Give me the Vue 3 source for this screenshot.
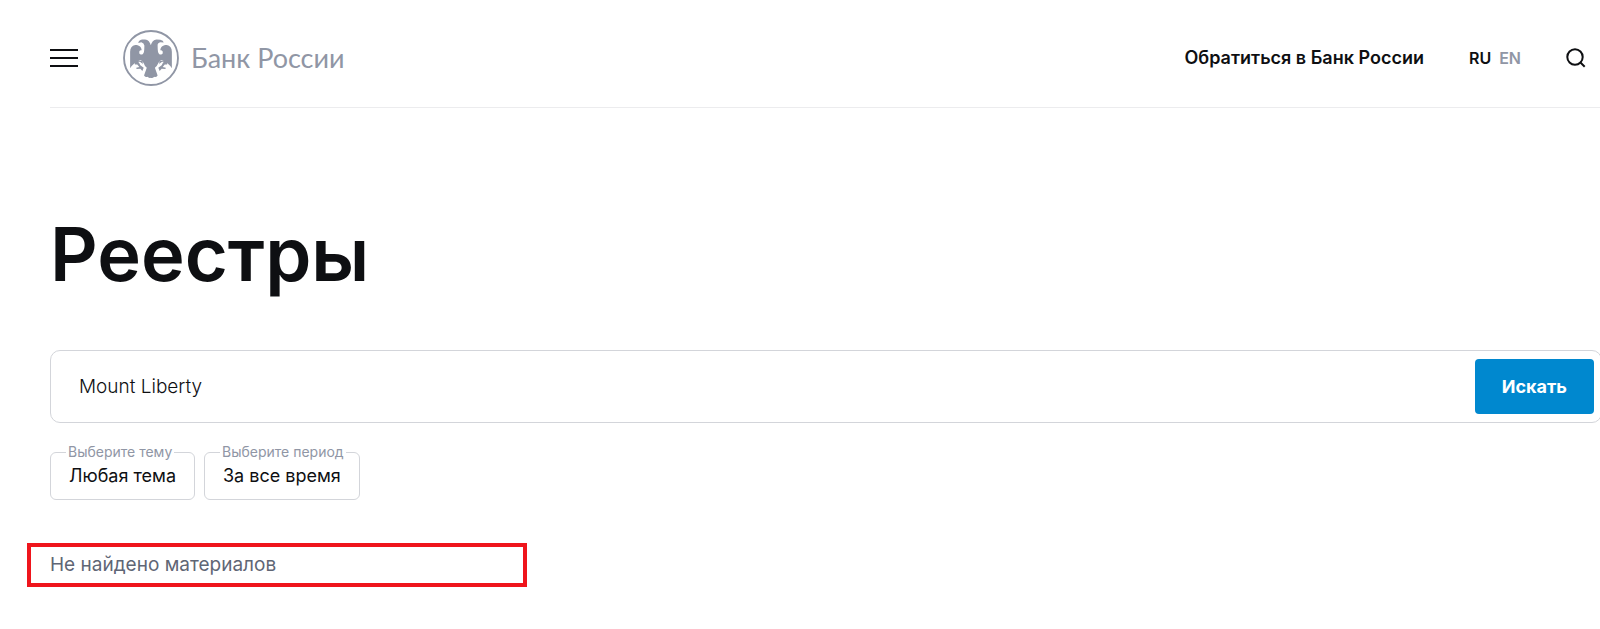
<script setup>
import { ref } from 'vue'

const query = ref('Mount Liberty')
const theme = ref('Любая тема')
const period = ref('За все время')
</script>

<template>
  <div class="page">
    <header class="header">
      <button class="icon-button" type="button" aria-label="Меню">
        <svg width="28" height="18" viewBox="0 0 28 18">
          <path d="M0 1h28M0 9h28M0 17h28" stroke="#0e0f12" stroke-width="2" />
        </svg>
      </button>
      <a class="logo" href="#">
        <svg width="56" height="56" viewBox="0 0 165 165" aria-hidden="true">
          <circle cx="82.5" cy="82.5" r="79.5" fill="none" stroke="#9096a5" stroke-width="5.5" />
          <g fill="#9096a5">
            <path d="M82 45C84 36 90 29 99 28L110 29Q119 31 120 37L110 36Q101 39 102 46Q102 56 103 63C104 70 108 73 113 72Q119 70 117 63Q114 59 110 60C110 49 119 44 129 44Q144 47 144 64V113Q139 104 130 97Q123 91 113 89Q106 91 104 98Q100 107 94 111L102 134Q98 140 92 138Q87 143 82 141Q77 143 73 138Q66 140 62 134L70 111Q64 107 61 98Q58 91 52 89Q42 91 35 97Q26 104 21 113V64Q21 47 36 44C46 44 55 49 55 60Q50 59 48 63Q46 70 52 72C57 73 61 70 62 63Q63 56 63 46Q62 39 54 36L45 38Q46 30 56 28L65 28C74 29 80 36 82 45Z" />
            <path d="M36 91H58V106H36ZM107 91H129V106H107Z" />
          </g>
          <path d="M29 109Q38 92 51 94Q59 97 62 108L68 113L64 123L54 119L28 119ZM136 109Q127 92 114 94Q106 97 103 108L97 113L101 123L111 119L137 119Z" fill="#fff" />
          <g fill="#9096a5">
            <path d="M34 96Q42 91 47 96L51 104L61 111L57 121L51 114L40 115L39 111L48 109L42 102L35 102Z" />
            <path d="M131 96Q123 91 118 96L114 104L104 111L108 121L114 114L125 115L126 111L117 109L123 102L130 102Z" />
          </g>
        </svg>
        <span class="logo-text">Банк России</span>
      </a>
      <a class="contact" href="#">Обратиться в Банк России</a>
      <nav class="languages" aria-label="Язык">
        <a class="language active" href="#">RU</a>
        <a class="language" href="#">EN</a>
      </nav>
      <button class="icon-button" type="button" aria-label="Поиск">
        <svg width="20" height="20" viewBox="0 0 20 20" fill="none" stroke="#0e0f12" stroke-width="2">
          <circle cx="9" cy="9" r="7.7" />
          <path d="M14.2 14.2L18.7 18.7" />
        </svg>
      </button>
    </header>

    <main class="content">
      <h1 class="title">Реестры</h1>
      <form @submit.prevent>
        <div class="search">
          <input v-model="query" class="query" type="text" aria-label="Поиск по реестрам" />
          <button class="submit" type="submit">Искать</button>
        </div>
        <div class="filters">
          <div class="filter">
            <label class="filter-label" for="theme">Выберите тему</label>
            <select id="theme" v-model="theme" class="filter-select">
              <option>Любая тема</option>
            </select>
          </div>
          <div class="filter">
            <label class="filter-label" for="period">Выберите период</label>
            <select id="period" v-model="period" class="filter-select">
              <option>За все время</option>
            </select>
          </div>
        </div>
      </form>
      <p class="result">Не найдено материалов</p>
    </main>
  </div>
</template>

<style>
body {
  margin: 0;
  background: #fff;
}
</style>

<style scoped>
.page {
  padding-left: 50px;
  overflow: hidden;
  font-family: Inter, "Liberation Sans", sans-serif;
  color: #0e0f12;
}

.header {
  display: flex;
  align-items: center;
  padding: 30px 14px 21px 0;
  border-bottom: 1px solid #ececee;
}

.icon-button {
  display: flex;
  padding: 0;
  border: 0;
  background: none;
}

.logo {
  display: flex;
  align-items: center;
  gap: 12px;
  margin-left: 45px;
  color: #9096a5;
  text-decoration: none;
}

.logo-text {
  font-family: Lato, "Open Sans", sans-serif;
  font-size: 27px;
  line-height: 32px;
}

.contact {
  margin-left: auto;
  font-size: 18px;
  font-weight: 600;
  line-height: 24px;
  color: inherit;
  text-decoration: none;
}

.languages {
  display: flex;
  gap: 8px;
  margin: 0 45px;
}

.language {
  font-size: 16px;
  font-weight: 600;
  line-height: 24px;
  color: #9096a5;
  text-decoration: none;
}

.language.active {
  color: #0e0f12;
}

.content {
  padding-top: 104px;
}

.title {
  margin: 0;
  font-size: 74px;
  font-weight: 600;
  line-height: 84px;
}

.search {
  display: flex;
  align-items: center;
  margin: 54px -2px 0 0;
  padding: 8px 7px 8px 8px;
  border: 1px solid #d3d5da;
  border-radius: 10px;
}

.query {
  flex: 1;
  min-width: 0;
  height: 55px;
  box-sizing: border-box;
  padding: 0 20px;
  border: 0;
  outline: 0;
  background: none;
  font: 300 19px/24px Inter, "Liberation Sans", sans-serif;
  color: inherit;
}

.submit {
  height: 55px;
  padding: 0 27px;
  border: 0;
  border-radius: 4px;
  background: #0088cf;
  font: 700 18px/24px Inter, "Liberation Sans", sans-serif;
  color: #fff;
}

.filters {
  display: flex;
  gap: 9px;
  margin-top: 29px;
}

.filter {
  position: relative;
}

.filter-label {
  position: absolute;
  top: -8px;
  left: 16px;
  padding: 0 2px;
  background: #fff;
  font-size: 14px;
  line-height: 16px;
  white-space: nowrap;
  color: #9096a5;
}

.filter-select {
  appearance: none;
  height: 48px;
  padding: 0 18px;
  border: 1px solid #d3d5da;
  border-radius: 6px;
  background: none;
  font: 400 18px/24px Inter, "Liberation Sans", sans-serif;
  color: inherit;
}

.result {
  width: 500px;
  max-width: 100%;
  box-sizing: border-box;
  margin: 43px 0 0 -23px;
  padding: 6px 19px;
  border: 4px solid #ef151c;
  font-size: 19px;
  line-height: 24px;
  color: #5f6675;
}
</style>
